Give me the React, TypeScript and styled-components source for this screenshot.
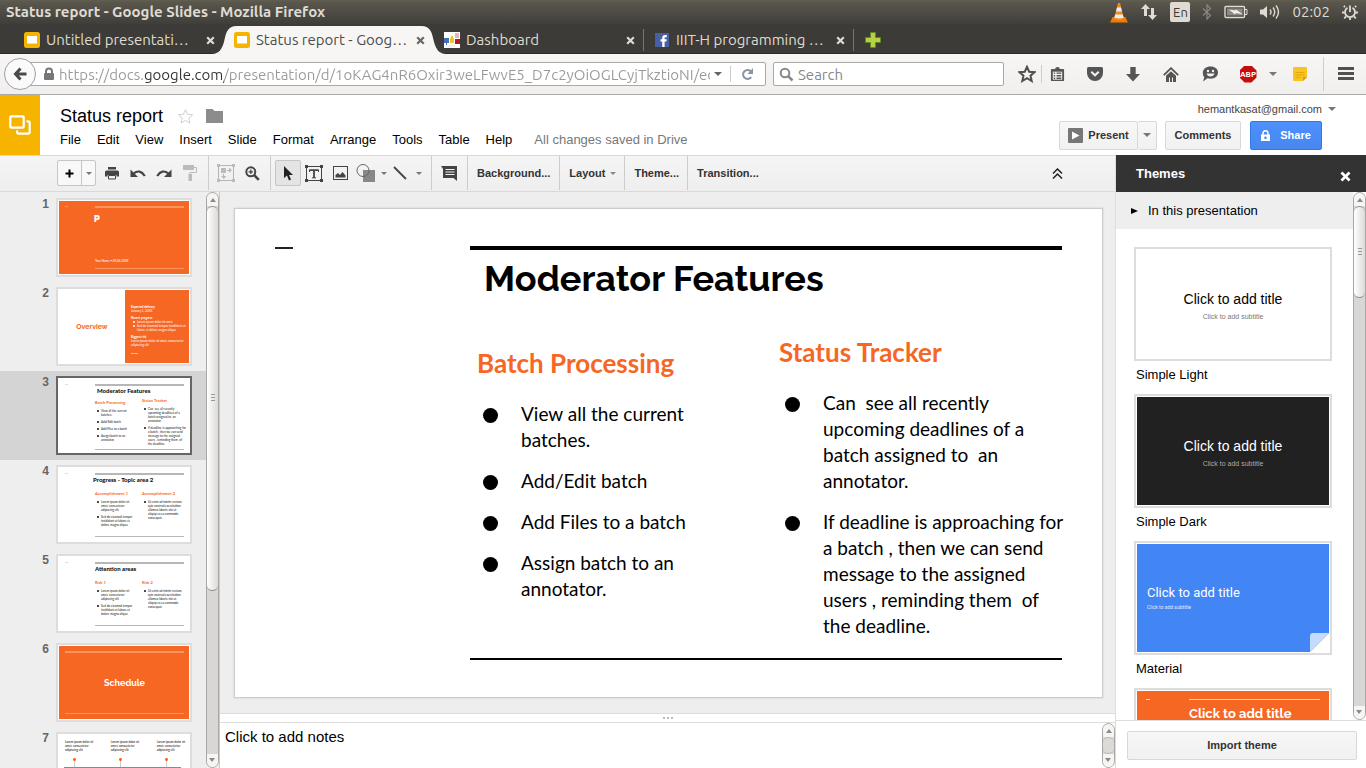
import React from "react";
import styled, { createGlobalStyle, css } from "styled-components";

const ui = '"Liberation Sans", Arial, sans-serif';
const chrome = 'Ubuntu, "Open Sans", "Noto Sans", sans-serif';
const lato = 'Lato, "Open Sans", sans-serif';
const raleway = 'Raleway, Lato, sans-serif';
const orange = "#f66724";

const Global = createGlobalStyle`
  *, *::before, *::after { box-sizing: border-box; }
  html, body { margin: 0; height: 100%; overflow: hidden; }
  body { font-family: ${ui}; font-size: 13px; color: #000; background: #eee; }
  button, input, textarea { font: inherit; color: inherit; margin: 0; }
  button { padding: 0; border: 0; background: none; }
  h1, h2, h3, p, ul, ol { margin: 0; padding: 0; font-weight: inherit; font-size: inherit; }
  ul, ol { list-style: none; }
  a { color: inherit; text-decoration: none; }
  svg { display: block; flex: none; }
`;

/* ---------- window frame ---------- */

const Shell = styled.div`
  height: 100vh;
  display: flex;
  flex-direction: column;
`;

const TitleBar = styled.div`
  flex: none;
  height: 24px;
  padding: 0 8px 0 6px;
  display: flex;
  align-items: center;
  justify-content: space-between;
  background: linear-gradient(#63604f 0, #5a574e 2px, #3f3e39 100%);
  font-family: ${chrome};
  color: #dfdbd2;
`;

const WindowTitle = styled.h1`
  font-size: 15px;
  font-weight: 700;
  line-height: 24px;
`;

const Indicators = styled.div`
  display: flex;
  align-items: center;
  gap: 12px;
`;

const LangBadge = styled.span`
  width: 20px;
  height: 20px;
  border-radius: 2px;
  background: #dfdbd2;
  color: #3c3b37;
  font-size: 13px;
  line-height: 20px;
  text-align: center;
`;

const Clock = styled.span`
  font-size: 15px;
  line-height: 24px;
`;

const TabStrip = styled.div`
  flex: none;
  height: 30px;
  padding-left: 14px;
  display: flex;
  background: #3c3b37;
  border-bottom: 1px solid #2b2a27;
  font-family: ${chrome};
`;

const Tab = styled.div<{ $active?: boolean; $line?: boolean }>`
  position: relative;
  width: 210px;
  height: 30px;
  padding: 2px 8px 0 10px;
  display: flex;
  align-items: center;
  gap: 6px;
  color: ${(p) => (p.$active ? "#4c4c4c" : "#dfdbd2")};
  &::after {
    content: "";
    display: ${(p) => (p.$line ? "block" : "none")};
    position: absolute;
    right: 0;
    top: 5px;
    height: 22px;
    width: 1px;
    background: #77756f;
  }
`;

const TabShape = styled.svg`
  position: absolute;
  left: -12px;
  top: 2px;
`;

const TabLabel = styled.span`
  position: relative;
  flex: 1;
  font-size: 15px;
  line-height: 28px;
  white-space: nowrap;
`;

const Layer = styled.span`
  position: relative;
`;

const TabClose = styled.button`
  position: relative;
  width: 10px;
  height: 12px;
`;

const NewTab = styled.button`
  width: 38px;
  padding: 2px 0 0 11px;
`;

const NavBar = styled.div`
  flex: none;
  height: 41px;
  padding: 0 13px 0 4px;
  display: flex;
  align-items: center;
  background: linear-gradient(#f7f6f5, #f0efed);
  border-bottom: 1px solid #aaa9a7;
  font-family: ${chrome};
`;

const BackButton = styled.button`
  position: relative;
  z-index: 1;
  width: 32px;
  height: 32px;
  margin-right: -16px;
  border: 1px solid #9aa0a8;
  border-radius: 50%;
  background: #fafafa;
  display: flex;
  align-items: center;
  justify-content: center;
`;

const Field = styled.label<{ $grow: number; $left: number }>`
  flex: ${(p) => p.$grow} 1 0;
  min-width: 0;
  height: 24px;
  padding: 0 11px 0 ${(p) => p.$left}px;
  display: flex;
  align-items: center;
  gap: 4px;
  border: 1px solid #aaa9a5;
  border-radius: 2px;
  background: #fff;
`;

const SearchField = styled(Field)`
  margin-left: 7px;
`;

const FieldInput = styled.input`
  flex: 1;
  min-width: 0;
  height: 22px;
  padding: 0;
  border: 0;
  outline: 0;
  background: transparent;
  font-size: 15px;
  color: #999;
  &::placeholder {
    color: #888;
    opacity: 1;
  }
`;

const UrlInput = styled(FieldInput)`
  background: linear-gradient(90deg, #999 86px, #333 86px, #333 165px, #999 165px);
  background-clip: text;
  -webkit-text-fill-color: transparent;
`;

const FieldLine = styled.span`
  width: 1px;
  height: 16px;
  margin: 0 6px 0 4px;
  background: #ccc;
`;

const NavIcons = styled.div`
  flex: none;
  display: flex;
  align-items: center;
  margin-left: 8px;
`;

const NavIcon = styled.button<{ $w?: number }>`
  width: ${(p) => p.$w ?? 38}px;
  height: 32px;
  display: flex;
  align-items: center;
  justify-content: center;
`;

const MenuButton = styled(NavIcon)`
  width: 29px;
  padding-left: 14px;
`;

const NavLine = styled.span<{ $tall?: boolean }>`
  width: 1px;
  height: ${(p) => (p.$tall ? 34 : 18)}px;
  background: #cfcecc;
`;

const AdBlock = styled.span`
  width: 17px;
  height: 17px;
  clip-path: polygon(30% 0, 70% 0, 100% 30%, 100% 70%, 70% 100%, 30% 100%, 0 70%, 0 30%);
  background: #c70d0c;
  color: #fff;
  font-size: 8px;
  font-weight: 700;
  line-height: 17px;
  text-align: center;
`;

/* ---------- document header ---------- */

const DocHeader = styled.header`
  flex: none;
  height: 60px;
  display: flex;
  background: #fff;
`;

const Logo = styled.a`
  width: 40px;
  background: #f6b400;
  display: flex;
  align-items: center;
  justify-content: center;
`;

const DocInfo = styled.div`
  flex: 1;
  padding: 9px 0 0 20px;
`;

const DocTitleRow = styled.div`
  height: 24px;
  display: flex;
  align-items: center;
  gap: 14px;
`;

const DocTitle = styled.h2`
  font-size: 18px;
  line-height: 24px;
`;

const MenuRow = styled.nav`
  height: 22px;
  display: flex;
  align-items: center;
  gap: 16px;
  white-space: nowrap;
`;

const SavedNote = styled.span`
  margin-left: 6px;
  color: #777;
`;

const Account = styled.div`
  padding: 7px 30px 0 0;
  display: flex;
  flex-direction: column;
  align-items: flex-end;
  gap: 5px;
`;

const AccountLink = styled.a`
  height: 14px;
  display: flex;
  align-items: center;
  gap: 6px;
  font-size: 11px;
  color: #444;
`;

const HeaderButtons = styled.div`
  display: flex;
  padding-right: 14px;
`;

const pushButton = css`
  height: 29px;
  padding-bottom: 1px;
  border: 1px solid #d8d8d8;
  border-radius: 2px;
  background: linear-gradient(#f7f7f7, #f1f1f1);
  color: #333;
  font-size: 11px;
  font-weight: 700;
  display: flex;
  align-items: center;
  justify-content: center;
`;

const PushButton = styled.button<{ $w: number; $gap?: number; $joined?: boolean }>`
  ${pushButton}
  width: ${(p) => p.$w}px;
  gap: 5px;
  margin-left: ${(p) => p.$gap ?? 0}px;
  ${(p) => p.$joined && "border-left: 0;"}
`;

const ShareButton = styled(PushButton)`
  gap: 10px;
  border-color: #3079ed;
  background: linear-gradient(#4d90fe, #4787ed);
  color: #fff;
`;

/* ---------- work area ---------- */

const Body = styled.div`
  flex: 1;
  min-height: 0;
  display: flex;
`;

const Editor = styled.main`
  flex: 1;
  min-width: 0;
  display: flex;
  flex-direction: column;
`;

const Toolbar = styled.div`
  flex: none;
  height: 37px;
  padding: 0 0 1px 57px;
  display: flex;
  align-items: center;
  border-top: 1px solid #d9d9d9;
  border-bottom: 1px solid #d9d9d9;
  background: linear-gradient(#f5f5f5, #eee);
`;

const Tool = styled.button<{ $w?: number; $on?: boolean }>`
  width: ${(p) => p.$w ?? 26}px;
  height: 26px;
  display: flex;
  align-items: center;
  justify-content: center;
  gap: 5px;
  border: 1px solid ${(p) => (p.$on ? "#c6c6c6" : "transparent")};
  border-radius: 2px;
  background: ${(p) => (p.$on ? "#e4e4e4" : "transparent")};
`;

const LineTool = styled(Tool)`
  gap: 9px;
`;

const AddSlide = styled.div`
  height: 26px;
  margin-right: 3px;
  display: flex;
  border: 1px solid #c6c6c6;
  border-radius: 2px;
  background: #f8f8f8;
`;

const AddPart = styled.button<{ $w: number }>`
  width: ${(p) => p.$w}px;
  display: flex;
  align-items: center;
  justify-content: center;
  & + & {
    border-left: 1px solid #c6c6c6;
  }
`;

const ToolLine = styled.span<{ $last?: boolean }>`
  flex: none;
  width: 1px;
  height: 34px;
  margin: ${(p) => (p.$last ? "0 0 0 5px" : "0 4px 0 5px")};
  background: #ccc;
`;

const TextTool = styled.button`
  height: 34px;
  padding: 0 9px;
  display: flex;
  align-items: center;
  gap: 5px;
  font-size: 11px;
  font-weight: 700;
  color: #333;
  & + & {
    padding-right: 8px;
    border-left: 1px solid #ccc;
  }
`;

const Collapse = styled.button`
  margin-left: auto;
  margin-right: 52px;
`;

const Workspace = styled.div`
  flex: 1;
  min-height: 0;
  display: flex;
`;

const Strip = styled.ol`
  flex: none;
  width: 206px;
  padding-top: 1px;
  overflow: hidden;
  background: #eee;
`;

const StripRow = styled.li<{ $on?: boolean }>`
  height: 89px;
  padding: 5px 0;
  display: grid;
  grid-template-columns: 49px 136px;
  column-gap: 7px;
  background: ${(p) => (p.$on ? "#d4d4d4" : "transparent")};
`;

const StripNumber = styled.span`
  font-size: 12px;
  font-weight: 700;
  line-height: 12px;
  color: #666;
  text-align: right;
`;

const Thumb = styled.div<{ $on?: boolean }>`
  height: 79px;
  padding: 1px;
  border: 2px solid ${(p) => (p.$on ? "#666" : "#ddd")};
  background: #fff;
  font-family: ${lato};
  font-size: 3px;
  line-height: 4px;
  white-space: pre;
  overflow: hidden;
`;

const MiniFace = styled.div<{ $fill?: string; $pad: string }>`
  height: 73px;
  padding: ${(p) => p.$pad};
  display: flex;
  flex-direction: column;
  background: ${(p) => p.$fill ?? "#fff"};
  color: ${(p) => (p.$fill ? "#fff" : "#111")};
`;

const MiniRule = styled.div<{ $h: number; $left: number; $c: string }>`
  flex: none;
  height: ${(p) => p.$h}px;
  margin-left: ${(p) => p.$left}px;
  background: ${(p) => p.$c};
`;

const MiniRuleRow = styled.div<{ $c: string; $dash: string }>`
  flex: none;
  height: 2px;
  display: grid;
  grid-template-columns: 3px 1fr;
  column-gap: 27px;
  &::before {
    content: "";
    height: 1px;
    background: ${(p) => p.$dash};
  }
  &::after {
    content: "";
    background: ${(p) => p.$c};
  }
`;

const MiniTitle = styled.p<{ $left: number }>`
  margin: 1px 0 0 ${(p) => p.$left}px;
  font-size: 6px;
  font-weight: 900;
  line-height: 8px;
`;

const MiniColumns = styled.div<{ $top: number }>`
  flex: 1;
  margin: ${(p) => p.$top}px 0 0 30px;
  display: grid;
  grid-template-columns: 47px 1fr;
`;

const MiniColumn = styled.div<{ $up?: boolean }>`
  margin-top: ${(p) => (p.$up ? 0 : 2)}px;
`;

const MiniHeading = styled.p`
  margin-bottom: 4px;
  font-size: 4px;
  font-weight: 700;
  line-height: 5px;
  color: ${orange};
`;

const MiniItem = styled.p`
  position: relative;
  margin: 0 0 3px 6px;
  &::before {
    content: "";
    position: absolute;
    left: -4px;
    top: 1px;
    width: 2px;
    height: 2px;
    border-radius: 50%;
    background: currentColor;
  }
`;

const MiniBig = styled.p<{ $c: string; $size: number }>`
  font-family: ${raleway};
  font-size: ${(p) => p.$size}px;
  font-weight: 700;
  line-height: 10px;
  color: ${(p) => p.$c};
  text-align: center;
`;

const MiniLetter = styled(MiniBig)`
  padding: 4px 0 0 29px;
  font-weight: 900;
  text-align: left;
`;

const CoverName = styled.p`
  margin: auto 0 5px 30px;
`;

const MiniSplit = styled.div`
  height: 73px;
  display: grid;
  grid-template-columns: 66px 1fr;
  align-items: center;
`;

const MiniAside = styled.div`
  height: 73px;
  padding: 15px 0 0 6px;
  background: ${orange};
  color: #fff;
`;

const MiniStrong = styled.p`
  font-weight: 700;
`;

const MiniBlock = styled.div`
  margin-bottom: 3px;
`;

const AsideItem = styled(MiniItem)`
  margin-bottom: 0;
`;

const AsideDash = styled.div`
  width: 7px;
  height: 1px;
  margin-top: 6px;
  background: #fbb391;
`;

const ScheduleBox = styled.div`
  flex: 1;
  display: flex;
  align-items: center;
  justify-content: center;
`;

const Timeline = styled.div`
  padding: 5px 4px 0 6px;
  display: flex;
  justify-content: space-between;
`;

const TimelineStop = styled.div`
  display: flex;
  flex-direction: column;
  &::after {
    content: "";
    width: 3px;
    height: 9px;
    margin: 6px 0 0 8px;
    background:
      radial-gradient(circle, ${orange} 60%, transparent 75%) 0 0 / 3px 3px no-repeat,
      linear-gradient(#ccc, #ccc) 1px 3px / 1px 6px no-repeat;
  }
`;

const TimelineBar = styled.div`
  height: 6px;
  margin: 0 8px 0 5px;
  background: ${orange};
`;

const BarBox = styled.div`
  flex: none;
  width: 13px;
  display: flex;
  flex-direction: column;
  border: 1px solid #a9a7a3;
  border-radius: 7px;
  background: #d8d7d5;
  overflow: hidden;
`;

const BarArrow = styled.button<{ $down?: boolean }>`
  flex: none;
  height: 13px;
  display: flex;
  align-items: center;
  justify-content: center;
  background: #f6f5f4;
  transform: ${(p) => (p.$down ? "rotate(180deg)" : "none")};
`;

const BarThumb = styled.div<{ $share: number; $flat?: boolean }>`
  flex: ${(p) => p.$share} 0 0;
  border: 1px solid ${(p) => (p.$flat ? "#b9b7b4" : "#8f8d89")};
  border-width: 1px 0;
  border-radius: 7px;
  background: ${(p) => (p.$flat ? "#dcdad7" : "linear-gradient(90deg, #fff, #dcdad8)")};
  display: flex;
  align-items: center;
  justify-content: center;
`;

const BarRest = styled.div<{ $share: number }>`
  flex: ${(p) => p.$share} 0 0;
`;

const Stage = styled.section`
  flex: 1;
  min-width: 0;
  display: flex;
  flex-direction: column;
  border-left: 1px solid #ccc;
`;

const StagePad = styled.div`
  flex: 1;
  min-height: 0;
  padding: 16px 12px 15px 14px;
  display: flex;
`;

const Slide = styled.article`
  flex: 1;
  padding: 37px 40px 37px 40px;
  display: grid;
  grid-template-columns: 18px 1fr;
  column-gap: 177px;
  border: 1px solid #ccc;
  box-shadow: 0 0 2px #ccc;
  background: #fff;
`;

const Dash = styled.div`
  height: 2px;
  margin-top: 1px;
  background: #222;
`;

const SlideBody = styled.div`
  display: flex;
  flex-direction: column;
  border-top: 4px solid #000;
  border-bottom: 2px solid #000;
`;

const SlideTitle = styled.h2`
  padding: 6px 0 0 14px;
  font-family: ${raleway};
  font-size: 36px;
  font-weight: 700;
  line-height: 44px;
  white-space: nowrap;
`;

const SlideColumns = styled.div`
  flex: 1;
  padding: 36px 0 0 7px;
  display: grid;
  grid-template-columns: 302px 1fr;
  font-family: ${lato};
`;

const SlideColumn = styled.div<{ $drop?: boolean }>`
  margin-top: ${(p) => (p.$drop ? 11 : 0)}px;
`;

const ColumnHeading = styled.h3`
  margin-bottom: 22px;
  font-size: 26px;
  font-weight: 700;
  line-height: 32px;
  color: ${orange};
`;

const Bullet = styled.li`
  display: grid;
  grid-template-columns: 38px 1fr;
  margin: 0 -8px 15px 6px;
  font-size: 19px;
  line-height: 26px;
  white-space: pre;
  &::before {
    content: "";
    width: 15px;
    height: 15px;
    margin-top: 7px;
    border-radius: 50%;
    background: #000;
  }
`;

const Grip = styled.div`
  flex: none;
  height: 10px;
  display: flex;
  align-items: center;
  justify-content: center;
  gap: 2px;
  border: 1px solid #ddd;
  border-width: 1px 0;
  background: #fff;
  i {
    width: 2px;
    height: 2px;
    background: #bbb;
  }
`;

const Notes = styled.div`
  flex: none;
  height: 45px;
  display: flex;
  background: #fff;
`;

const NotesBox = styled.textarea`
  flex: 1;
  height: 45px;
  padding: 5px;
  border: 0;
  outline: 0;
  resize: none;
  overflow: hidden;
  font-size: 15px;
  line-height: 18px;
`;

/* ---------- themes panel ---------- */

const Panel = styled.aside`
  flex: none;
  width: 251px;
  display: flex;
  flex-direction: column;
  border-left: 1px solid #ddd;
  background: #fff;
`;

const PanelHead = styled.div`
  flex: none;
  height: 37px;
  padding: 0 15px 0 20px;
  display: flex;
  align-items: center;
  justify-content: space-between;
  background: #333;
  color: #fff;
  font-weight: 700;
`;

const CloseButton = styled.button`
  padding-top: 5px;
`;

const PanelScroll = styled.div`
  flex: 1;
  min-height: 0;
  display: flex;
`;

const PanelContent = styled.div`
  flex: 1;
  overflow: hidden;
`;

const Disclosure = styled.button`
  width: 100%;
  height: 37px;
  padding-left: 15px;
  display: flex;
  align-items: center;
  gap: 10px;
  background: #eee;
`;

const ThemeList = styled.ul`
  padding: 18px 21px 0 18px;
  display: flex;
  flex-direction: column;
  gap: 19px;
`;

const ThemeCard = styled.li`
  height: 128px;
`;

const ThemeFrame = styled.div`
  height: 114px;
  padding: 1px;
  border: 2px solid #ddd;
`;

const ThemeFace = styled.div<{ $bg: string; $fg: string; $left?: boolean }>`
  position: relative;
  height: 108px;
  padding: 39px 0 0 ${(p) => (p.$left ? 10 : 0)}px;
  background: ${(p) => p.$bg};
  color: ${(p) => p.$fg};
  font-family: ${(p) => (p.$left ? "Roboto, sans-serif" : ui)};
  text-align: ${(p) => (p.$left ? "left" : "center")};
`;

const FaceTitle = styled.p<{ $size: number }>`
  font-size: ${(p) => p.$size}px;
  line-height: 20px;
`;

const FaceSub = styled.p<{ $size: number; $c: string; $top: number }>`
  padding-top: ${(p) => p.$top}px;
  font-size: ${(p) => p.$size}px;
  line-height: 9px;
  color: ${(p) => p.$c};
`;

const Fold = styled.svg`
  position: absolute;
  right: 0;
  bottom: 0;
`;

const SwissFace = styled.div`
  height: 108px;
  padding: 8px 9px 0;
  background: ${orange};
  color: #fff;
  font-family: ${raleway};
`;

const SwissTitle = styled.p`
  padding: 4px 0 0 43px;
  font-size: 13px;
  font-weight: 700;
  line-height: 20px;
  white-space: nowrap;
`;

const SwissRule = styled.div`
  display: grid;
  grid-template-columns: 4px 1fr;
  column-gap: 39px;
  &::before,
  &::after {
    content: "";
    height: 1px;
    background: #fcd0bb;
  }
`;

const ThemeName = styled.p`
  padding: 6px 0 0 2px;
  line-height: 16px;
`;

const PanelFoot = styled.div`
  flex: none;
  height: 48px;
  padding: 10px 9px 8px 11px;
  border-top: 1px solid #ddd;
`;

const ImportButton = styled.button`
  ${pushButton}
  width: 100%;
`;

/* ---------- drawings ---------- */

const Caret = ({ c = "#777", s = 8 }: { c?: string; s?: number }) => (
  <svg width={s} height={s / 2} viewBox="0 0 8 4">
    <path d="M0 0h8L4 4z" fill={c} />
  </svg>
);

const Cross = ({ c, s = 9 }: { c: string; s?: number }) => (
  <svg width={s} height={s} viewBox="0 0 9 9">
    <path d="M1.2 1.2l6.6 6.6M7.8 1.2L1.2 7.8" stroke={c} strokeWidth="2.2" />
  </svg>
);

const SlidesFavicon = () => (
  <svg width="16" height="16">
    <rect width="16" height="16" rx="2.5" fill="#f5b400" />
    <rect x="3" y="4" width="10" height="7.5" fill="#fff" />
  </svg>
);

const DashboardFavicon = () => (
  <svg width="16" height="16">
    <rect width="16" height="16" fill="#fff" />
    <path d="M0 6h5v5H3v2H2v-2H0z" fill="#4a6cb4" />
    <path d="M6 6h4v5H6zM7 4h2v2H7z" fill="#e8c92c" />
    <path d="M11 7h5v5h-5z" fill="#b8182f" />
    <path d="M11 1h4v5h-4z" fill="#eab3bb" />
    <path d="M1 14h10" stroke="#e4e4e4" />
  </svg>
);

const FacebookFavicon = () => (
  <svg width="16" height="16">
    <rect x="1" y="1" width="14" height="14" fill="#4760a4" />
    <path d="M8.2 15V9.5H6.5V7.3h1.7V6c0-2 1.1-3 3-3h1.6v2.3h-1.2c-.8 0-1 .4-1 1v1h2.1l-.3 2.2h-1.8V15z" fill="#fff" />
  </svg>
);

const Vlc = () => (
  <svg width="18" height="22" viewBox="0 0 18 22">
    <path d="M2.5 16h13l2.3 5.5H.2z" fill="#f07c00" />
    <path d="M8 2h2l4 16q-5 2.5-10 0z" fill="#f48a1c" />
    <path d="M7 6.5h4l1 4H6zM5.2 13.5h7.6l.9 3q-4.700 1.800-9.400 0z" fill="#e9e9ee" />
  </svg>
);

const Network = () => (
  <svg width="18" height="18" viewBox="0 0 18 18" fill="#dfdbd2">
    <path d="M5.500 1L10 6H7v7H4V6H1zM12.500 17L8 12h3V5h3v7h3z" />
  </svg>
);

const Bluetooth = () => (
  <svg width="10" height="16" viewBox="0 0 10 16" fill="none" stroke="#8a8880" strokeWidth="1.200">
    <path d="M1 4.500l7.500 7L5 15V1l3.500 3.500-7.500 7" />
  </svg>
);

const Battery = () => (
  <svg width="24" height="14" viewBox="0 0 24 14">
    <rect x="1" y="1.500" width="19.500" height="11" rx="1" fill="none" stroke="#dfdbd2" strokeWidth="1.400" />
    <rect x="3" y="3.500" width="15.500" height="7" fill="#8c8a82" />
    <path d="M21 4.500h2v5h-2" fill="none" stroke="#dfdbd2" />
    <path d="M5 4.500l6 1 1-1 7 5-7-1.500-1 1.500z" fill="#f2efe8" />
  </svg>
);

const Speaker = () => (
  <svg width="20" height="16" viewBox="0 0 20 16">
    <path d="M0 5.500h3L7 2v12l-4-3.500H0z" fill="#dfdbd2" />
    <path d="M10 5.500q2 2.500 0 5M13 3.500q3.500 4.500 0 9M16 1.500q5 6.500 0 13" fill="none" stroke="#dfdbd2" strokeWidth="1.400" />
  </svg>
);

const PowerGear = () => (
  <svg width="16" height="16" viewBox="0 0 16 16" fill="none" stroke="#dfdbd2">
    <path d="M5.500 3.800a5 5 0 1 0 5 0" strokeWidth="1.800" />
    <path d="M8 1.500V8" strokeWidth="1.800" />
    <path d="M3 3L1.800 1.800M13 3l1.200-1.200M2.500 8.500H0M13.500 8.500H16M4 12.500l-1.800 1.800M12 12.500l1.800 1.800M8 13.500V16" strokeWidth="1.800" />
  </svg>
);

const StarIcon = ({ c, w, s = 18 }: { c: string; w: number; s?: number }) => (
  <svg width={s} height={s} viewBox="0 0 18 18" fill="none" stroke={c} strokeWidth={w}>
    <path d="M9 1.800l2.200 4.900 5.300.5-4 3.500 1.200 5.300L9 13.200 4.300 16l1.200-5.300-4-3.500 5.300-.5z" />
  </svg>
);

const Plus = () => (
  <svg width="16" height="16" viewBox="0 0 16 16">
    <path d="M5.500.5h5v5h5v5h-5v5h-5v-5h-5v-5h5z" fill="#b6d147" stroke="#5f8a1c" />
  </svg>
);

const ChatFace = () => (
  <svg width="18" height="16" viewBox="0 0 18 16">
    <path d="M9.500.5c4.500 0 7.500 2.500 7.500 6s-3 6.200-7.500 6.200c-1 0-2 0-3-.4L2 15.500l1.300-4.200C2.200 10 1.800 8.500 1.800 6.800 1.800 3 5 .5 9.500.5z" fill="#555" />
    <circle cx="7" cy="5" r="1.200" fill="#f3f2f1" />
    <circle cx="12" cy="5" r="1.200" fill="#f3f2f1" />
    <path d="M5.500 7.500h8q-1 3-4 3t-4-3z" fill="#f3f2f1" />
  </svg>
);

const ArrowUp = () => (
  <svg width="6" height="4" viewBox="0 0 6 4">
    <path d="M0 4h6L3 0z" fill="#8c8a86" />
  </svg>
);

const FolderShape = styled.svg`
  margin-left: -2px;
`;

const Folder = () => (
  <FolderShape width="17" height="14" viewBox="0 0 17 14">
    <path d="M0 0h6.500l2 2H17v12H0z" fill="#8c8c8c" />
  </FolderShape>
);

function ScrollBar({ thumb, rest, grip, flat }: { thumb: number; rest: number; grip?: boolean; flat?: boolean }) {
  return (
    <BarBox>
      <BarArrow aria-label="Scroll up"><ArrowUp /></BarArrow>
      <BarThumb $share={thumb} $flat={flat}>
        {grip && (
          <svg width="4" height="8"><path d="M0 .5h4M0 3.500h4M0 6.500h4" stroke="#999" /></svg>
        )}
      </BarThumb>
      <BarRest $share={rest} />
      <BarArrow $down aria-label="Scroll down"><ArrowUp /></BarArrow>
    </BarBox>
  );
}

/* ---------- data ---------- */

const url = "https://docs.google.com/presentation/d/1oKAG4nR6Oxir3weLFwvE5_D7c2yOiOGLCyjTkztioNI/ed";

const menus = ["File", "Edit", "View", "Insert", "Slide", "Format", "Arrange", "Tools", "Table", "Help"];

type Column = { heading: string; items: string[] };

const features: Column[] = [
  {
    heading: "Batch Processing",
    items: ["View all the current\nbatches.", "Add/Edit batch", "Add Files to a batch", "Assign batch to an\nannotator."],
  },
  {
    heading: "Status Tracker",
    items: [
      "Can  see all recently\nupcoming deadlines of a\nbatch assigned to  an\nannotator.",
      "If deadline is approaching for\na batch , then we can send\nmessage to the assigned\nusers , reminding them  of\nthe deadline.",
    ],
  },
];

const loremItems = [
  ["Lorem ipsum dolor sit\namet, consectetur\nadipiscing elit", "Sed do eiusmod tempor\nincididunt ut labore et\ndolore magna aliqua"],
  ["Ut enim ad minim veniam,\nquis nostrud exercitation\nullamco laboris nisi ut\naliquip ex ea commodo\nconsequat."],
];

const loremColumns = (a: string, b: string): Column[] => [
  { heading: a, items: loremItems[0] },
  { heading: b, items: loremItems[1] },
];

type TwoColumnProps = { title: string; left: number; top: number; columns: Column[]; stagger?: boolean };

function MiniTwoColumn({ title, left, top, columns, stagger }: TwoColumnProps) {
  return (
    <MiniFace $pad="5px 5px 4px 6px">
      <MiniRuleRow $c="#b7b7b7" $dash="#ddd" />
      <MiniTitle $left={left}>{title}</MiniTitle>
      <MiniColumns $top={top}>
        {columns.map((c, i) => (
          <MiniColumn key={c.heading} $up={!stagger || i === 1}>
            <MiniHeading>{c.heading}</MiniHeading>
            {c.items.map((t) => <MiniItem key={t}>{t}</MiniItem>)}
          </MiniColumn>
        ))}
      </MiniColumns>
      <MiniRule $h={1} $left={30} $c="#b7b7b7" />
    </MiniFace>
  );
}

const MiniCover = () => (
  <MiniFace $fill={orange} $pad="5px 5px 5px 6px">
    <MiniRuleRow $c="#f9955f" $dash="#f9955f" />
    <MiniLetter $c="#fff" $size={9}>p</MiniLetter>
    <CoverName>Your Name • 09.04.20XX</CoverName>
    <MiniRule $h={1} $left={30} $c="#f9955f" />
  </MiniFace>
);

const MiniOverview = () => (
  <MiniSplit>
    <MiniBig $c={orange} $size={7}>Overview</MiniBig>
    <MiniAside>
      <MiniBlock><MiniStrong>Expected delivery</MiniStrong>January 1, 20XX</MiniBlock>
      <MiniStrong>Recent progress</MiniStrong>
      <MiniBlock>
        <AsideItem>Lorem ipsum dolor sit amet</AsideItem>
        <AsideItem>{"Sed do eiusmod tempor incididunt ut\nlabore et dolore magna aliqua"}</AsideItem>
      </MiniBlock>
      <MiniBlock><MiniStrong>Biggest risk</MiniStrong>{"Lorem ipsum dolor sit amet, consectetur\nadipiscing elit"}</MiniBlock>
      <AsideDash />
    </MiniAside>
  </MiniSplit>
);

const MiniSchedule = () => (
  <MiniFace $fill={orange} $pad="5px 5px 5px 6px">
    <MiniRule $h={2} $left={0} $c="#f9955f" />
    <ScheduleBox><MiniBig $c="#fff" $size={9}>Schedule</MiniBig></ScheduleBox>
    <MiniRule $h={1} $left={0} $c="#f9955f" />
  </MiniFace>
);

const MiniTimeline = () => (
  <>
    <Timeline>
      {[0, 1, 2].map((i) => (
        <TimelineStop key={i}>{"Lorem ipsum dolor sit\namet, consectetur\nadipiscing elit"}</TimelineStop>
      ))}
    </Timeline>
    <TimelineBar />
  </>
);

const thumbs = [
  <MiniCover />,
  <MiniOverview />,
  <MiniTwoColumn title="Moderator Features" left={32} top={3} columns={features} stagger />,
  <MiniTwoColumn title="Progress - Topic area 2" left={28} top={7} columns={loremColumns("Accomplishment 1", "Accomplishment 2")} />,
  <MiniTwoColumn title="Attention areas" left={30} top={7} columns={loremColumns("Risk 1", "Risk 2")} />,
  <MiniSchedule />,
  <MiniTimeline />,
];

/* ---------- page ---------- */

export default function App() {
  return (
    <Shell>
      <Global />
      <TitleBar>
        <WindowTitle>Status report - Google Slides - Mozilla Firefox</WindowTitle>
        <Indicators>
          <Vlc />
          <Network />
          <LangBadge>En</LangBadge>
          <Bluetooth />
          <Battery />
          <Speaker />
          <Clock>02:02</Clock>
          <PowerGear />
        </Indicators>
      </TitleBar>

      <TabStrip>
        <Tab>
          <SlidesFavicon />
          <TabLabel>Untitled presentati…</TabLabel>
          <TabClose aria-label="Close tab"><Cross c="#dfdbd2" /></TabClose>
        </Tab>
        <Tab $active>
          <TabShape width="234" height="28">
            <path d="M0 28C7 28 10 23 12 16C14 7 15 0 25 0H209C219 0 220 7 222 16C224 23 227 28 234 28Z" fill="#f7f6f5" />
          </TabShape>
          <Layer><SlidesFavicon /></Layer>
          <TabLabel>Status report - Goog…</TabLabel>
          <TabClose aria-label="Close tab"><Cross c="#666" /></TabClose>
        </Tab>
        <Tab $line>
          <DashboardFavicon />
          <TabLabel>Dashboard</TabLabel>
          <TabClose aria-label="Close tab"><Cross c="#dfdbd2" /></TabClose>
        </Tab>
        <Tab $line>
          <FacebookFavicon />
          <TabLabel>IIIT-H programming …</TabLabel>
          <TabClose aria-label="Close tab"><Cross c="#dfdbd2" /></TabClose>
        </Tab>
        <NewTab aria-label="New tab"><Plus /></NewTab>
      </TabStrip>

      <NavBar>
        <BackButton aria-label="Back">
          <svg width="14" height="14" viewBox="0 0 14 14" fill="none" stroke="#4a4a4a" strokeWidth="3">
            <path d="M7.500 1.500L2.500 7l5 5.500M3 7h10.500" />
          </svg>
        </BackButton>
        <Field $grow={711} $left={22}>
          <svg width="12" height="14" viewBox="0 0 12 14">
            <path d="M3 7V4.500a3 3 0 0 1 6 0V7" fill="none" stroke="#777" strokeWidth="2" />
            <rect x="1" y="6" width="10" height="7" rx="1" fill="#777" />
          </svg>
          <UrlInput aria-label="Address" readOnly value={url} />
          <Caret c="#666" />
          <FieldLine />
          <svg width="13" height="13" viewBox="0 0 13 13">
            <path d="M10.200 9.200A4.500 4.500 0 1 1 10 3.500" fill="none" stroke="#8794a3" strokeWidth="2" />
            <path d="M12 0v6H6.500z" fill="#8794a3" />
          </svg>
        </Field>
        <SearchField $grow={213} $left={5}>
          <svg width="15" height="15" viewBox="0 0 15 15" fill="none" stroke="#888">
            <circle cx="6" cy="6" r="4.300" strokeWidth="2" />
            <path d="M9.200 9.200L13.500 13.500" strokeWidth="2.600" />
          </svg>
          <FieldInput aria-label="Search" placeholder="Search" />
        </SearchField>
        <NavIcons>
          <NavIcon $w={29} aria-label="Bookmark"><StarIcon c="#4f4f4f" w={2} /></NavIcon>
          <NavLine />
          <NavIcon $w={30} aria-label="Bookmarks list">
            <svg width="15" height="15" viewBox="0 0 16 16">
              <path d="M2 2h3.500a2.500 2 0 0 1 5 0H14q1 0 1 1v11q0 1-1 1H2q-1 0-1-1V3q0-1 1-1z" fill="#555" />
              <path d="M3 5h10v8.500H3z" fill="#f3f2f1" />
              <path d="M4 6.500h1.500M7 6.500h5M4 9.300h1.500M7 9.300h5M4 12h1.500M7 12h5" stroke="#555" strokeWidth="1.400" />
            </svg>
          </NavIcon>
          <NavIcon $w={46} aria-label="Pocket">
            <svg width="16" height="14" viewBox="0 0 16 14">
              <path d="M1.500 0h13Q16 0 16 1.500V6a8 8 0 0 1-16 0V1.500Q0 0 1.500 0z" fill="#555" />
              <path d="M4.300 4.800L8 8.300l3.700-3.500" fill="none" stroke="#f3f2f1" strokeWidth="2" />
            </svg>
          </NavIcon>
          <NavIcon $w={30} aria-label="Downloads">
            <svg width="14" height="15" viewBox="0 0 14 15"><path d="M4.300 0h5.400v7H14l-7 7.500L0 7h4.300z" fill="#555" /></svg>
          </NavIcon>
          <NavIcon $w={46} aria-label="Home">
            <svg width="16" height="15" viewBox="0 0 16 15">
              <path d="M.8 8.200L8 1.200l7.200 7" fill="none" stroke="#555" strokeWidth="1.800" />
              <path d="M3 8.800L8 4.200l5 4.600V15h-3v-4.500H9V15H7v-4.500H6V15H3z" fill="#555" />
            </svg>
          </NavIcon>
          <NavIcon $w={32} aria-label="Hello"><ChatFace /></NavIcon>
          <NavIcon $w={44} aria-label="Adblock Plus"><AdBlock>ABP</AdBlock></NavIcon>
          <NavIcon $w={6} aria-label="Adblock menu"><Caret /></NavIcon>
          <NavIcon $w={47} aria-label="Notes">
            <svg width="14" height="14">
              <path d="M1 0h12q1 0 1 1v9l-4 4H1q-1 0-1-1V1q0-1 1-1z" fill="#f9c41f" />
              <path d="M2.500 5.500h9M2.500 8h9M2.500 10.500h5" stroke="#e2a90c" />
              <path d="M14 10h-4v4z" fill="#d99c00" />
            </svg>
          </NavIcon>
          <NavLine $tall />
          <MenuButton aria-label="Open menu">
            <svg width="16" height="14"><path d="M0 1.500h16M0 6.500h16M0 11.500h16" stroke="#505050" strokeWidth="3" /></svg>
          </MenuButton>
        </NavIcons>
      </NavBar>

      <DocHeader>
        <Logo href="#" aria-label="Slides home">
          <svg width="22" height="20" viewBox="0 0 22 20" fill="none" stroke="#fff" strokeWidth="2.200">
            <rect x="1.300" y="1.300" width="13.400" height="11.400" rx="1" />
            <path d="M17.500 6.300H19q1.700 0 1.700 1.700v9q0 1.700-1.700 1.700H9.800q-1.700 0-1.700-1.700v-1.500" />
          </svg>
        </Logo>
        <DocInfo>
          <DocTitleRow>
            <DocTitle>Status report</DocTitle>
            <StarIcon c="#ccc" w={1} s={17} />
            <Folder />
          </DocTitleRow>
          <MenuRow>
            {menus.map((m) => <button key={m}>{m}</button>)}
            <SavedNote>All changes saved in Drive</SavedNote>
          </MenuRow>
        </DocInfo>
        <Account>
          <AccountLink href="#">hemantkasat@gmail.com <Caret /></AccountLink>
          <HeaderButtons>
            <PushButton $w={79}>
              <svg width="15" height="15"><rect width="15" height="15" rx="1" fill="#777" /><path d="M4 3.500l7.500 4-7.500 4z" fill="#fff" /></svg>
              Present
            </PushButton>
            <PushButton $w={19} $joined aria-label="Present options"><Caret /></PushButton>
            <PushButton $w={76} $gap={8}>Comments</PushButton>
            <ShareButton $w={72} $gap={9}>
              <svg width="9" height="11" viewBox="0 0 9 11">
                <path d="M2 5V3.200a2.500 2.500 0 0 1 5 0V5" fill="none" stroke="#fff" strokeWidth="1.500" />
                <rect y="4.500" width="9" height="6.500" fill="#fff" />
                <circle cx="4.500" cy="7.700" r="1.300" fill="#4787ed" />
              </svg>
              Share
            </ShareButton>
          </HeaderButtons>
        </Account>
      </DocHeader>

      <Body>
        <Editor>
          <Toolbar>
            <AddSlide>
              <AddPart $w={23} aria-label="New slide">
                <svg width="9" height="9"><path d="M4.500.5v8M.5 4.500h8" stroke="#000" strokeWidth="2" /></svg>
              </AddPart>
              <AddPart $w={14} aria-label="New slide with layout"><Caret s={6} /></AddPart>
            </AddSlide>
            <Tool aria-label="Print">
              <svg width="14" height="13" viewBox="0 0 14 13" fill="#444">
                <path d="M3 0h8v2.500H3zM1.500 3.500h11Q14 3.500 14 5v4.500h-2.500V8h-9v1.500H0V5q0-1.500 1.500-1.500z" />
                <path d="M3.500 8.500h7V12h-7z" fill="#eee" stroke="#444" />
              </svg>
            </Tool>
            <Tool aria-label="Undo">
              <svg width="16" height="9" viewBox="0 0 16 9"><path d="M3.500 4.500Q10-.5 14.800 7" fill="none" stroke="#444" strokeWidth="2.200" /><path d="M.5.500v7.500H8z" fill="#444" /></svg>
            </Tool>
            <Tool aria-label="Redo">
              <svg width="16" height="9" viewBox="0 0 16 9"><path d="M12.500 4.500Q6-.5 1.200 7" fill="none" stroke="#444" strokeWidth="2.200" /><path d="M15.500.500v7.500H8z" fill="#444" /></svg>
            </Tool>
            <Tool aria-label="Paint format">
              <svg width="14" height="16" viewBox="0 0 14 16"><path d="M0 0h11v5H0z" fill="#bbb" /><path d="M11 2.500h2.500v5H7V9" fill="none" stroke="#bbb" /><path d="M5.500 9h3.500v7H5.500z" fill="#bbb" /></svg>
            </Tool>
            <ToolLine />
            <Tool aria-label="Zoom to fit">
              <svg width="18" height="18" viewBox="0 0 18 18" fill="none" stroke="#b5b5b5">
                <rect x="1.500" y="1.500" width="15" height="15" />
                <path d="M0 0h3v3H0zM15 0h3v3h-3zM0 15h3v3H0zM15 15h3v3h-3z" fill="#bbb" stroke="none" />
                <path d="M4 4h5v5H4zM12 3.500v5.500l3-2.700zM4 12h5.500l-2.700 3z" fill="#bbb" stroke="none" />
                <path d="M10 6.500h3M6.500 10v3" />
              </svg>
            </Tool>
            <Tool aria-label="Zoom">
              <svg width="15" height="15" viewBox="0 0 15 15" fill="none" stroke="#444">
                <circle cx="5.800" cy="5.800" r="4.500" strokeWidth="2" /><path d="M9.200 9.200l4.600 4.600" strokeWidth="2.600" /><path d="M5.800 3.500v4.600M3.500 5.800h4.600" strokeWidth="1.300" />
              </svg>
            </Tool>
            <ToolLine />
            <Tool $on aria-label="Select">
              <svg width="10" height="15" viewBox="0 0 10 15"><path d="M1 0v12l3-2.500 2 5 2-1-2-4.500h4z" fill="#222" /></svg>
            </Tool>
            <Tool aria-label="Text box">
              <svg width="18" height="17" viewBox="0 0 18 17" fill="none" stroke="#444">
                <rect x="1.500" y="1.500" width="15" height="14" />
                <path d="M0 0h3v3H0zM15 0h3v3h-3zM0 14h3v3H0zM15 14h3v3h-3z" fill="#444" stroke="none" />
                <path d="M5 5.200h8M9 5v8" strokeWidth="1.800" /><path d="M4.500 4.500v2.500M13.500 4.500v2.500M7 12.800h4" />
              </svg>
            </Tool>
            <Tool aria-label="Image">
              <svg width="15" height="14" viewBox="0 0 15 14"><rect x=".5" y=".5" width="14" height="13" fill="none" stroke="#444" /><path d="M2.500 11.500V9l2.500-2 2 2 2.500-3 3 3.500v2z" fill="#444" /></svg>
            </Tool>
            <Tool $w={36} aria-label="Shape">
              <svg width="20" height="18" viewBox="0 0 20 18"><path d="M7 6h12v12H7z" fill="#888" /><circle cx="7" cy="6.500" r="6" fill="none" stroke="#666" /></svg>
              <Caret s={6} />
            </Tool>
            <LineTool $w={37} aria-label="Line">
              <svg width="14" height="14"><path d="M1 1l12 12" stroke="#444" strokeWidth="1.800" /></svg>
              <Caret s={6} />
            </LineTool>
            <ToolLine />
            <Tool aria-label="Comment">
              <svg width="16" height="15" viewBox="0 0 16 15"><path d="M0 0h16v15l-3.500-3H2V3z" fill="#444" /><path d="M4.500 3.500h9M4.500 6h9M4.500 8.500h9" stroke="#f1f1f1" /></svg>
            </Tool>
            <ToolLine $last />
            <TextTool>Background...</TextTool>
            <TextTool>Layout <Caret c="#888" s={6} /></TextTool>
            <TextTool>Theme...</TextTool>
            <TextTool>Transition...</TextTool>
            <Collapse aria-label="Hide menus">
              <svg width="11" height="11" fill="none" stroke="#222" strokeWidth="1.500"><path d="M1 5.500l4.500-4.500L10 5.500M1 10.500L5.500 6l4.500 4.500" /></svg>
            </Collapse>
          </Toolbar>

          <Workspace>
            <Strip>
              {thumbs.map((face, i) => (
                <StripRow key={i} $on={i === 2}>
                  <StripNumber>{i + 1}</StripNumber>
                  <Thumb $on={i === 2}>{face}</Thumb>
                </StripRow>
              ))}
            </Strip>
            <ScrollBar thumb={385} rest={164} grip />
            <Stage>
              <StagePad>
                <Slide>
                  <Dash />
                  <SlideBody>
                    <SlideTitle>Moderator Features</SlideTitle>
                    <SlideColumns>
                      {features.map((c, i) => (
                        <SlideColumn key={c.heading} $drop={i === 0}>
                          <ColumnHeading>{c.heading}</ColumnHeading>
                          <ul>{c.items.map((t) => <Bullet key={t}>{t}</Bullet>)}</ul>
                        </SlideColumn>
                      ))}
                    </SlideColumns>
                  </SlideBody>
                </Slide>
              </StagePad>
              <Grip><i /><i /><i /></Grip>
              <Notes>
                <NotesBox aria-label="Speaker notes" defaultValue="Click to add notes" />
                <ScrollBar thumb={18} rest={0} flat />
              </Notes>
            </Stage>
          </Workspace>
        </Editor>

        <Panel>
          <PanelHead>
            Themes
            <CloseButton aria-label="Close themes"><Cross c="#fff" s={11} /></CloseButton>
          </PanelHead>
          <PanelScroll>
            <PanelContent>
              <Disclosure>
                <svg width="7" height="6"><path d="M0 0l7 3-7 3z" fill="#000" /></svg>
                In this presentation
              </Disclosure>
              <ThemeList>
                <ThemeCard>
                  <ThemeFrame>
                    <ThemeFace $bg="#fff" $fg="#000">
                      <FaceTitle $size={14}>Click to add title</FaceTitle>
                      <FaceSub $size={7} $top={3} $c="#777">Click to add subtitle</FaceSub>
                    </ThemeFace>
                  </ThemeFrame>
                  <ThemeName>Simple Light</ThemeName>
                </ThemeCard>
                <ThemeCard>
                  <ThemeFrame>
                    <ThemeFace $bg="#212121" $fg="#fff">
                      <FaceTitle $size={14}>Click to add title</FaceTitle>
                      <FaceSub $size={7} $top={3} $c="#aaa">Click to add subtitle</FaceSub>
                    </ThemeFace>
                  </ThemeFrame>
                  <ThemeName>Simple Dark</ThemeName>
                </ThemeCard>
                <ThemeCard>
                  <ThemeFrame>
                    <ThemeFace $bg="#4285f4" $fg="#fff" $left>
                      <FaceTitle $size={13}>Click to add title</FaceTitle>
                      <FaceSub $size={5} $top={0} $c="#e3edfd">Click to add subtitle</FaceSub>
                      <Fold width="19" height="19"><path d="M0 19L19 0v19z" fill="#fff" /><path d="M0 19V3q0-3 3-3h16z" fill="#c6dafc" /></Fold>
                    </ThemeFace>
                  </ThemeFrame>
                  <ThemeName>Material</ThemeName>
                </ThemeCard>
                <ThemeCard>
                  <ThemeFrame>
                    <SwissFace>
                      <SwissRule />
                      <SwissTitle>Click to add title</SwissTitle>
                    </SwissFace>
                  </ThemeFrame>
                </ThemeCard>
              </ThemeList>
            </PanelContent>
            <ScrollBar thumb={91} rest={411} grip />
          </PanelScroll>
          <PanelFoot>
            <ImportButton>Import theme</ImportButton>
          </PanelFoot>
        </Panel>
      </Body>
    </Shell>
  );
}
